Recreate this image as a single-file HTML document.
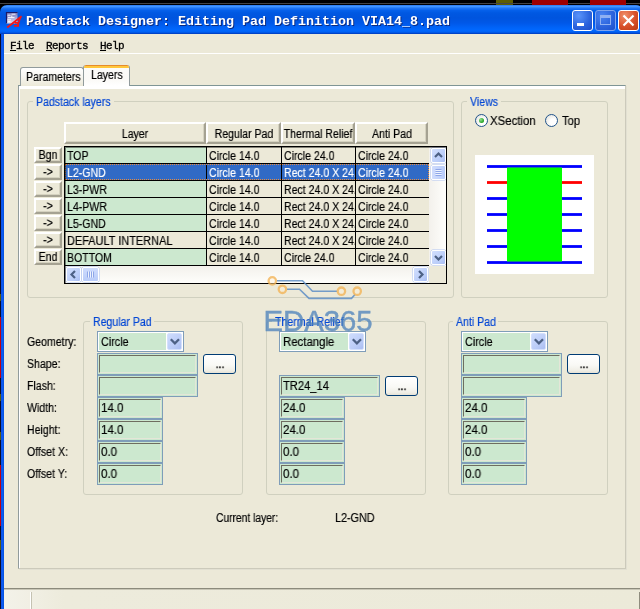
<!DOCTYPE html>
<html>
<head>
<meta charset="utf-8">
<title>Padstack Designer</title>
<style>
*{box-sizing:border-box;margin:0;padding:0}
html,body{width:640px;height:609px;overflow:hidden;background:#ece9d8}
body{position:relative;font-family:"Liberation Sans",sans-serif;font-size:12px;color:#000}
.abs{position:absolute}
.tx,.txc{-webkit-text-stroke:.18px;will-change:transform}
.tx{white-space:pre;line-height:14px;height:14px;font-size:12px;transform:scaleX(.88);transform-origin:0 50%}
.txc{white-space:pre;line-height:14px;height:14px;font-size:12px;transform:translateX(-50%) scaleX(.88);transform-origin:50% 50%}
.blue{color:#0046d5}
#topstrip{left:0;top:0;width:640px;height:14px;background:#000}
#topstrip i{position:absolute;top:0;height:4.5px;display:block}
#topstrip b{position:absolute;left:0;top:3.3px;width:640px;height:1px;background:#454545;display:block}
#titlebar{left:0;top:5px;width:643px;height:29px;border-radius:7px 7px 0 0;
 background:linear-gradient(#2a78f0 0,#4296ff 1.5px,#1c72f2 3.5px,#0560ea 5.5px,#0058e2 8px,#0054de 13px,#0058e8 18px,#0062f6 22px,#0068ff 25px,#0062f4 27px,#004ad4 28.2px,#0038b4 29px)}
#title{will-change:transform;left:26px;top:14px;font-family:"Liberation Mono",monospace;font-weight:bold;font-size:13.33px;line-height:16px;color:#fff;white-space:pre;text-shadow:1px 1px 0 #0a2a80}
#lborder{left:0;top:34px;width:4.2px;height:575px;background:linear-gradient(90deg,#0038c0 0,#0a50e6 1.2px,#0a5cf4 2.4px,#0654e4 3.4px,#0a48c8 4.2px)}
#lcol{left:0;top:34px;width:1px;height:575px;background:#0a0a28}
#lcol i{position:absolute;left:0;width:1px;display:block}
#menuline{left:4px;top:53px;width:636px;height:1px;background:#fff}
.menu{will-change:transform;top:39px;-webkit-text-stroke:.3px #000;font-family:"Liberation Mono",monospace;font-size:11px;line-height:14px;letter-spacing:-.6px;white-space:pre}
.cbtn{top:10px;width:21px;height:21px;border:1px solid #fff;border-radius:3px}
#tabpanel{left:18px;top:85px;width:608px;height:484px;background:linear-gradient(#fff 0,#fff 2.5px,#ece9d8 3.5px);border:1px solid;border-color:#7f9595 #cccabb #cccabb #919b9c;box-shadow:inset 1px 0 0 #fff,1px 1px 0 #e2e0d2}
.tab{border:1px solid #919b9c;border-bottom:none;border-radius:3px 3px 0 0;background:linear-gradient(#fff,#f7f6f0 50%,#ece9d8)}
#tab1{left:20px;top:67px;width:64px;height:19px}
#tab2{left:83px;top:65px;width:47px;height:21px;background:linear-gradient(#fcfcfa,#fbfaf7 70%,#fff);border-top:none;overflow:hidden}
#tab2 b{position:absolute;left:-1px;top:0;width:47px;height:3px;background:#ffc73c;border-top:1px solid #e68b2c;border-radius:3px 3px 0 0}
.gb{border:1px solid #d0d0bf;border-radius:3px}
.gbl{height:14px;background:#ece9d8}
.hdr{top:122px;height:21.5px;background:#ece9d8;border:2px solid;border-color:#fff #a5a292 #a5a292 #fff;box-shadow:inset -1px -1px 0 #d5d2c0;overflow:hidden}
.rb{left:34px;width:28px;height:16px;background:#ece9d8;border:2px solid;border-color:#fff #a5a292 #a5a292 #fff;box-shadow:inset -1px -1px 0 #d5d2c0}
#grid{left:64px;top:146px;width:383px;height:138px;border:1px solid #000;background:#ece9d8;overflow:hidden}
#gridsh{left:65px;top:147px;width:381px;height:136px;box-shadow:inset 1px 1px 0 rgba(0,0,0,.45);pointer-events:none}
.cell{position:absolute;height:16px;overflow:hidden;background:#ece9d8}
.cell.g{background:#cce8cf}
.cell.s{background:#316ac5;color:#fff}
.hl{position:absolute;left:0;width:364px;height:1px;background:#000}
.vl{position:absolute;top:0;width:1px;height:119px;background:#000}
.fld{height:22px;border:1px solid #7f9db9;background:#cce8cf;padding:1px}
.fld i{display:block;width:100%;height:100%;border:1px solid;border-color:#6e6d60 #e4e6d8 #e4e6d8 #6e6d60}
.cmb{height:21px;border:1px solid #7f9db9;background:#fff}
.cmb u{position:absolute;left:1px;top:1px;right:17.5px;bottom:1px;background:#cce8cf}
.cmb b{position:absolute;right:1px;top:1px;width:15.5px;height:17px;border-radius:2px;border:1px solid #d4e0fc;background:linear-gradient(135deg,#cfdcfd,#bccdf8 60%,#aabdf1)}
.cmb svg{position:absolute;left:0;top:0}
.xpb{width:33px;height:20px;border:1px solid #003c74;border-radius:3px;background:linear-gradient(#fff,#f9f9f5 55%,#f0efe7 85%,#e6e2d6)}
.sbb{width:15px;height:15px;border:1px solid #fff;border-radius:2px;background:linear-gradient(135deg,#d2dffd,#bacdf9 70%,#a9bdf2);box-shadow:0 0 0 .5px #b0c4f2}
.radio{width:13px;height:13px;border-radius:50%;border:1.3px solid #21548c;background:radial-gradient(circle at 65% 65%,#fff 30%,#dcdcd4 100%)}
#status{left:4px;top:588px;width:636px;height:21px;background:linear-gradient(90deg,#f3f2e9 0,#f1efe4 26px,#edebdc 60px,#ecead9 100%);border-top:1px solid #8c8a7c;box-shadow:inset 0 1px 0 #c8c6b6}
</style>
</head>
<body>
<div id="topstrip" class="abs"><i style="left:496px;width:17px;background:#5e5e00"></i><b></b><i style="left:532px;width:36px;background:#a00000"></i><i style="left:590px;width:36px;background:#a00000"></i></div>
<div id="titlebar" class="abs"></div>
<svg class="abs" style="left:4px;top:10px" width="20" height="20" viewBox="4 10 20 20"><defs><linearGradient id="ig" x1="0" y1="0" x2="0" y2="1"><stop offset="0" stop-color="#6c6cb0"/><stop offset=".5" stop-color="#a8a8d8"/><stop offset="1" stop-color="#e4e4f6"/></linearGradient></defs><rect x="6" y="12" width="11.5" height="11.5" fill="url(#ig)"/><path d="M6 12.5h11.5M6.5 12v11.5" stroke="#1a1a66" stroke-width="1.2" fill="none"/><path d="M7.5 15.2h3M11.5 14.2h4M8 17.6h6.5M11.8 15.5v2M7.5 19.8h3.5M8 21.6h2.5" stroke="#fff" stroke-width="1" fill="none" opacity=".9"/><path d="M7.2 27.6 L21.6 16.3" stroke="#f01818" stroke-width="1.9" fill="none"/><path d="M20.4 17.2 L17.3 26.6 M14 25.9h5 M14.6 22.9h4" stroke="#f01818" stroke-width="1.7" fill="none"/></svg>

<div id="title" class="abs">Padstack Designer: Editing Pad Definition VIA14_8.pad</div>
<div class="abs cbtn" style="left:572px;background:radial-gradient(circle at 30% 25%,#5a94fa,#2a62dc 60%,#1c4cc8)"><i style="position:absolute;left:4px;top:12px;width:7px;height:3px;background:#fff"></i></div>
<div class="abs cbtn" style="left:595px;border-color:#7ea4ee;background:radial-gradient(circle at 30% 25%,#4a84f2,#2a62dc 60%,#1e50cc)"><i style="position:absolute;left:4px;top:4px;width:11px;height:10px;border:1px solid #8fb0f2;border-top-width:3px"></i></div>
<div class="abs cbtn" style="left:618px;background:radial-gradient(circle at 30% 25%,#f0906a,#d8502a 55%,#b83a14)"><svg width="19" height="19" style="position:absolute;left:0;top:0"><path d="M4.5 4.5l10 10M14.5 4.5l-10 10" stroke="#fff" stroke-width="2.2"/></svg></div>

<div id="lborder" class="abs"></div>
<div id="lcol" class="abs"><i style="top:283px;height:61px;background:#c00010"></i><i style="top:431px;height:61px;background:#c00010"></i><i style="top:260px;height:7px;background:#5a5a10"></i><i style="top:360px;height:7px;background:#5a5a10"></i><i style="top:398px;height:8px;background:#5a5a10"></i><i style="top:506px;height:10px;background:#5a5a10"></i></div>
<div id="menuline" class="abs"></div>
<div class="abs menu" style="left:10px"><u>F</u>ile</div>
<div class="abs menu" style="left:46px"><u>R</u>eports</div>
<div class="abs menu" style="left:100px"><u>H</u>elp</div>
<div class="abs" id="tabpanel"></div>
<div class="abs tab" id="tab1"></div>
<div class="abs tab" id="tab2"><b></b></div>
<div class="abs tx " style="left:26px;top:70px;">Parameters</div>
<div class="abs tx " style="left:90.5px;top:67.5px;">Layers</div>
<div class="abs gb" style="left:27px;top:101px;width:427px;height:196.5px"></div>
<div class="abs gbl" style="left:33px;top:94px;width:81px"></div>
<div class="abs tx blue" style="left:36px;top:95px;">Padstack layers</div>
<div class="abs gb" style="left:461px;top:101px;width:147px;height:196.5px"></div>
<div class="abs gbl" style="left:467px;top:94px;width:34px"></div>
<div class="abs tx blue" style="left:470px;top:95px;">Views</div>
<div class="abs hdr" style="left:64px;width:142px"><div class="abs txc" style="left:50%;top:2.5px">Layer</div></div>
<div class="abs hdr" style="left:206px;width:75px"><div class="abs txc" style="left:50%;top:2.5px">Regular Pad</div></div>
<div class="abs hdr" style="left:281px;width:74px"><div class="abs txc" style="left:50%;top:2.5px">Thermal Relief</div></div>
<div class="abs hdr" style="left:355px;width:73px"><div class="abs txc" style="left:50%;top:2.5px">Anti Pad</div></div>
<div class="abs rb" style="top:146.5px"><div class="abs txc" style="left:50%;top:-0.5px">Bgn</div></div>
<div class="abs rb" style="top:163.5px"><div class="abs txc" style="left:50%;top:-0.5px">-&gt;</div></div>
<div class="abs rb" style="top:180.5px"><div class="abs txc" style="left:50%;top:-0.5px">-&gt;</div></div>
<div class="abs rb" style="top:197.5px"><div class="abs txc" style="left:50%;top:-0.5px">-&gt;</div></div>
<div class="abs rb" style="top:214.5px"><div class="abs txc" style="left:50%;top:-0.5px">-&gt;</div></div>
<div class="abs rb" style="top:231.5px"><div class="abs txc" style="left:50%;top:-0.5px">-&gt;</div></div>
<div class="abs rb" style="top:248.5px"><div class="abs txc" style="left:50%;top:-0.5px">End</div></div>
<div class="abs" id="grid">
<div class="cell g" style="left:0px;top:0px;width:141px"><div class="abs tx" style="left:2px;top:1.5px">TOP</div></div>
<div class="cell" style="left:142px;top:0px;width:74px"><div class="abs tx" style="left:1.8px;top:1.5px">Circle 14.0</div></div>
<div class="cell" style="left:217px;top:0px;width:73px"><div class="abs tx" style="left:1.8px;top:1.5px">Circle 24.0</div></div>
<div class="cell" style="left:291px;top:0px;width:73px"><div class="abs tx" style="left:1.8px;top:1.5px">Circle 24.0</div></div>
<div class="hl" style="top:16px"></div>
<div class="cell s" style="left:0px;top:17px;width:141px"><div class="abs tx" style="left:2px;top:1.5px">L2-GND</div></div>
<div class="cell s" style="left:142px;top:17px;width:74px"><div class="abs tx" style="left:1.8px;top:1.5px">Circle 14.0</div></div>
<div class="cell s" style="left:217px;top:17px;width:73px"><div class="abs tx" style="left:1.8px;top:1.5px">Rect 24.0 X 24.0</div></div>
<div class="cell s" style="left:291px;top:17px;width:73px"><div class="abs tx" style="left:1.8px;top:1.5px">Circle 24.0</div></div>
<div class="hl" style="top:33px"></div>
<div class="cell g" style="left:0px;top:34px;width:141px"><div class="abs tx" style="left:2px;top:1.5px">L3-PWR</div></div>
<div class="cell" style="left:142px;top:34px;width:74px"><div class="abs tx" style="left:1.8px;top:1.5px">Circle 14.0</div></div>
<div class="cell" style="left:217px;top:34px;width:73px"><div class="abs tx" style="left:1.8px;top:1.5px">Rect 24.0 X 24.0</div></div>
<div class="cell" style="left:291px;top:34px;width:73px"><div class="abs tx" style="left:1.8px;top:1.5px">Circle 24.0</div></div>
<div class="hl" style="top:50px"></div>
<div class="cell g" style="left:0px;top:51px;width:141px"><div class="abs tx" style="left:2px;top:1.5px">L4-PWR</div></div>
<div class="cell" style="left:142px;top:51px;width:74px"><div class="abs tx" style="left:1.8px;top:1.5px">Circle 14.0</div></div>
<div class="cell" style="left:217px;top:51px;width:73px"><div class="abs tx" style="left:1.8px;top:1.5px">Rect 24.0 X 24.0</div></div>
<div class="cell" style="left:291px;top:51px;width:73px"><div class="abs tx" style="left:1.8px;top:1.5px">Circle 24.0</div></div>
<div class="hl" style="top:67px"></div>
<div class="cell g" style="left:0px;top:68px;width:141px"><div class="abs tx" style="left:2px;top:1.5px">L5-GND</div></div>
<div class="cell" style="left:142px;top:68px;width:74px"><div class="abs tx" style="left:1.8px;top:1.5px">Circle 14.0</div></div>
<div class="cell" style="left:217px;top:68px;width:73px"><div class="abs tx" style="left:1.8px;top:1.5px">Rect 24.0 X 24.0</div></div>
<div class="cell" style="left:291px;top:68px;width:73px"><div class="abs tx" style="left:1.8px;top:1.5px">Circle 24.0</div></div>
<div class="hl" style="top:84px"></div>
<div class="cell" style="left:0px;top:85px;width:141px"><div class="abs tx" style="left:2px;top:1.5px;transform:scaleX(.912)">DEFAULT INTERNAL</div></div>
<div class="cell" style="left:142px;top:85px;width:74px"><div class="abs tx" style="left:1.8px;top:1.5px">Circle 14.0</div></div>
<div class="cell" style="left:217px;top:85px;width:73px"><div class="abs tx" style="left:1.8px;top:1.5px">Rect 24.0 X 24.0</div></div>
<div class="cell" style="left:291px;top:85px;width:73px"><div class="abs tx" style="left:1.8px;top:1.5px">Circle 24.0</div></div>
<div class="hl" style="top:101px"></div>
<div class="cell g" style="left:0px;top:102px;width:141px"><div class="abs tx" style="left:2px;top:1.5px">BOTTOM</div></div>
<div class="cell" style="left:142px;top:102px;width:74px"><div class="abs tx" style="left:1.8px;top:1.5px">Circle 14.0</div></div>
<div class="cell" style="left:217px;top:102px;width:73px"><div class="abs tx" style="left:1.8px;top:1.5px">Circle 24.0</div></div>
<div class="cell" style="left:291px;top:102px;width:73px"><div class="abs tx" style="left:1.8px;top:1.5px">Circle 24.0</div></div>
<div class="hl" style="top:118px"></div>
<div class="vl" style="left:141px"></div>
<div class="vl" style="left:216px"></div>
<div class="vl" style="left:290px"></div>
<div class="abs" style="left:0;top:17px;width:364px;height:16px;border:1px dotted #ec8c3c"></div>
<div class="abs" style="left:364px;top:0;width:17px;height:119px;background:linear-gradient(90deg,#f3f1ec,#fefefb)"></div>
<div class="abs sbb" style="left:365.5px;top:1px"><svg width="13" height="13" viewBox="1 1 13 13" style="position:absolute;left:0;top:0"><polyline points="4,9 7.5,5.5 11,9" fill="none" stroke="#4d6185" stroke-width="2.2"/></svg></div>
<div class="abs sbb" style="left:365.5px;top:17.5px;background:linear-gradient(90deg,#cfdcfd,#b9ccf9)"><svg width="13" height="13" style="position:absolute;left:0;top:0"><path d="M3.5 3.5h6M3.5 5.5h6M3.5 7.5h6M3.5 9.5h6" stroke="#8ea6e8" stroke-width="1"/><path d="M3.5 4.5h6M3.5 6.5h6M3.5 8.5h6" stroke="#eef4fe" stroke-width="1"/></svg></div>
<div class="abs sbb" style="left:365.5px;top:103px"><svg width="13" height="13" viewBox="1 1 13 13" style="position:absolute;left:0;top:0"><polyline points="4,6 7.5,9.5 11,6" fill="none" stroke="#4d6185" stroke-width="2.2"/></svg></div>
<div class="abs" style="left:0;top:119px;width:364px;height:17px;background:linear-gradient(#f3f1ec,#fefefb)"></div>
<div class="abs" style="left:364px;top:119px;width:17px;height:17px;background:#ece9d8"></div>
<div class="abs sbb" style="left:1px;top:120px"><svg width="13" height="13" viewBox="1 1 13 13" style="position:absolute;left:0;top:0"><polyline points="9,4 5.5,7.5 9,11" fill="none" stroke="#4d6185" stroke-width="2.2"/></svg></div>
<div class="abs sbb" style="left:17px;top:120px;width:16.5px;background:linear-gradient(#cfdcfd,#b9ccf9)"><svg width="14" height="13" style="position:absolute;left:0;top:0"><path d="M4.5 3.5v6M6.5 3.5v6M8.5 3.5v6M10.5 3.5v6" stroke="#8ea6e8" stroke-width="1"/><path d="M5.5 3.5v6M7.5 3.5v6M9.5 3.5v6" stroke="#eef4fe" stroke-width="1"/></svg></div>
<div class="abs sbb" style="left:347.5px;top:120px"><svg width="13" height="13" viewBox="1 1 13 13" style="position:absolute;left:0;top:0"><polyline points="6,4 9.5,7.5 6,11" fill="none" stroke="#4d6185" stroke-width="2.2"/></svg></div>

</div>
<div class="abs" id="gridsh"></div>
<div class="abs radio" style="left:475px;top:114px"><i style="position:absolute;left:3px;top:3px;width:5px;height:5px;border-radius:50%;background:radial-gradient(circle at 35% 35%,#8fe08f,#21a121 70%)"></i></div>
<div class="abs radio" style="left:545px;top:114px"></div>
<div class="abs tx" style="left:490px;top:114px;transform:scaleX(.95)">XSection</div>
<div class="abs tx" style="left:561.5px;top:114px;transform:scaleX(.93)">Top</div>
<svg class="abs" style="left:475px;top:155px" width="119" height="119" viewBox="475 155 119 119"><rect x="475" y="155" width="119" height="119" fill="#fff"/><rect x="487" y="165.1" width="95" height="2.8" fill="#0000ff"/><rect x="487" y="181.1" width="95" height="2.8" fill="#ff0000"/><rect x="487" y="197.1" width="95" height="2.8" fill="#0000ff"/><rect x="487" y="213.1" width="95" height="2.8" fill="#0000ff"/><rect x="487" y="229.1" width="95" height="2.8" fill="#0000ff"/><rect x="487" y="245.1" width="95" height="2.8" fill="#0000ff"/><rect x="487" y="261.1" width="95" height="2.8" fill="#0000ff"/><rect x="507" y="167.5" width="55" height="94" fill="#00ff00"/></svg>

<div class="abs gb" style="left:83px;top:321px;width:160px;height:174px"></div>
<div class="abs gbl" style="left:89.5px;top:314px;width:64px"></div>
<div class="abs tx blue" style="left:92.5px;top:315px;">Regular Pad</div>
<div class="abs gb" style="left:266px;top:321px;width:160px;height:174px"></div>
<div class="abs gbl" style="left:272px;top:314px;width:73px"></div>
<div class="abs tx blue" style="left:275px;top:315px;">Thermal Relief</div>
<div class="abs gb" style="left:448px;top:321px;width:160px;height:174px"></div>
<div class="abs gbl" style="left:453px;top:314px;width:45px"></div>
<div class="abs tx blue" style="left:456px;top:315px;">Anti Pad</div>
<div class="abs tx " style="left:27px;top:335px;">Geometry:</div>
<div class="abs tx " style="left:27px;top:357px;">Shape:</div>
<div class="abs tx " style="left:27px;top:379px;">Flash:</div>
<div class="abs tx " style="left:27px;top:401px;">Width:</div>
<div class="abs tx " style="left:27px;top:423px;">Height:</div>
<div class="abs tx " style="left:27px;top:445px;">Offset X:</div>
<div class="abs tx " style="left:27px;top:467px;">Offset Y:</div>
<div class="abs cmb" style="left:97px;top:331px;width:87px"><u></u><b><svg width="14" height="15" viewBox="0 0 14 15"><polyline points="2.8,5.2 6.9,9.3 11,5.2" fill="none" stroke="#4d6185" stroke-width="2.3"/></svg></b></div>
<div class="abs tx " style="left:101px;top:335px;transform:scaleX(0.9);">Circle</div>
<div class="abs fld" style="left:97px;top:353px;width:101px"><i></i></div>
<div class="abs xpb" style="left:203px;top:354px"><div class="abs txc" style="left:50%;top:2px;-webkit-text-stroke:.3px">...</div></div>
<div class="abs fld" style="left:97px;top:375px;width:101px"><i></i></div>
<div class="abs fld" style="left:97px;top:397px;width:66px"><i></i></div>
<div class="abs tx " style="left:101px;top:401px;transform:scaleX(0.96);">14.0</div>
<div class="abs fld" style="left:97px;top:419px;width:66px"><i></i></div>
<div class="abs tx " style="left:101px;top:423px;transform:scaleX(0.96);">14.0</div>
<div class="abs fld" style="left:97px;top:441px;width:66px"><i></i></div>
<div class="abs tx " style="left:101px;top:445px;transform:scaleX(0.96);">0.0</div>
<div class="abs fld" style="left:97px;top:463px;width:66px"><i></i></div>
<div class="abs tx " style="left:101px;top:467px;transform:scaleX(0.96);">0.0</div>
<div class="abs cmb" style="left:279px;top:331px;width:87px"><u></u><b><svg width="14" height="15" viewBox="0 0 14 15"><polyline points="2.8,5.2 6.9,9.3 11,5.2" fill="none" stroke="#4d6185" stroke-width="2.3"/></svg></b></div>
<div class="abs tx " style="left:283px;top:335px;transform:scaleX(0.95);">Rectangle</div>
<div class="abs fld" style="left:279px;top:375px;width:101px"><i></i></div>
<div class="abs tx " style="left:283px;top:379px;transform:scaleX(0.93);">TR24_14</div>
<div class="abs xpb" style="left:385px;top:376px"><div class="abs txc" style="left:50%;top:2px;-webkit-text-stroke:.3px">...</div></div>
<div class="abs fld" style="left:279px;top:397px;width:66px"><i></i></div>
<div class="abs tx " style="left:283px;top:401px;transform:scaleX(0.96);">24.0</div>
<div class="abs fld" style="left:279px;top:419px;width:66px"><i></i></div>
<div class="abs tx " style="left:283px;top:423px;transform:scaleX(0.96);">24.0</div>
<div class="abs fld" style="left:279px;top:441px;width:66px"><i></i></div>
<div class="abs tx " style="left:283px;top:445px;transform:scaleX(0.96);">0.0</div>
<div class="abs fld" style="left:279px;top:463px;width:66px"><i></i></div>
<div class="abs tx " style="left:283px;top:467px;transform:scaleX(0.96);">0.0</div>
<div class="abs cmb" style="left:461px;top:331px;width:87px"><u></u><b><svg width="14" height="15" viewBox="0 0 14 15"><polyline points="2.8,5.2 6.9,9.3 11,5.2" fill="none" stroke="#4d6185" stroke-width="2.3"/></svg></b></div>
<div class="abs tx " style="left:465px;top:335px;transform:scaleX(0.9);">Circle</div>
<div class="abs fld" style="left:461px;top:353px;width:101px"><i></i></div>
<div class="abs xpb" style="left:567px;top:354px"><div class="abs txc" style="left:50%;top:2px;-webkit-text-stroke:.3px">...</div></div>
<div class="abs fld" style="left:461px;top:375px;width:101px"><i></i></div>
<div class="abs fld" style="left:461px;top:397px;width:66px"><i></i></div>
<div class="abs tx " style="left:465px;top:401px;transform:scaleX(0.96);">24.0</div>
<div class="abs fld" style="left:461px;top:419px;width:66px"><i></i></div>
<div class="abs tx " style="left:465px;top:423px;transform:scaleX(0.96);">24.0</div>
<div class="abs fld" style="left:461px;top:441px;width:66px"><i></i></div>
<div class="abs tx " style="left:465px;top:445px;transform:scaleX(0.96);">0.0</div>
<div class="abs fld" style="left:461px;top:463px;width:66px"><i></i></div>
<div class="abs tx " style="left:465px;top:467px;transform:scaleX(0.96);">0.0</div>
<div class="abs tx " style="left:216px;top:511px;transform:scaleX(0.855);">Current layer:</div>
<div class="abs tx " style="left:334.5px;top:511px;transform:scaleX(0.9);">L2-GND</div>
<svg class="abs" style="left:255px;top:270px" width="130" height="70" viewBox="255 270 130 70"><g fill="none" stroke="#5f8fc6" stroke-width="1.6" opacity=".85"><polyline points="277,280.8 302.5,280.8 312.5,291.2 337,291.2"/><polyline points="287,289.2 299.5,289.2 309,298.4 351.5,298.4 355,294.5"/></g><g stroke="#f3b558" stroke-width="2.3" opacity=".8" fill="rgba(255,240,215,.5)"><circle cx="272.3" cy="280.9" r="3.7"/><circle cx="282.4" cy="289.3" r="3.7"/><circle cx="341.4" cy="291.2" r="3.7"/><circle cx="357.2" cy="291.2" r="3.7"/></g><text x="263.6" y="331" font-family="Liberation Sans, sans-serif" font-size="29.8" fill="#4a80bb" stroke="#4a80bb" stroke-width=".45" opacity=".76" textLength="109" lengthAdjust="spacingAndGlyphs">EDA365</text></svg>

<div class="abs" id="status"></div>
<div class="abs" style="left:638.6px;top:592px;width:2px;height:17px;background:#8f8d7e"></div>
<div class="abs" style="left:30px;top:592px;width:2px;height:17px;background:linear-gradient(90deg,#fff 50%,#c5c2b2 50%)"></div>
</body>
</html>
